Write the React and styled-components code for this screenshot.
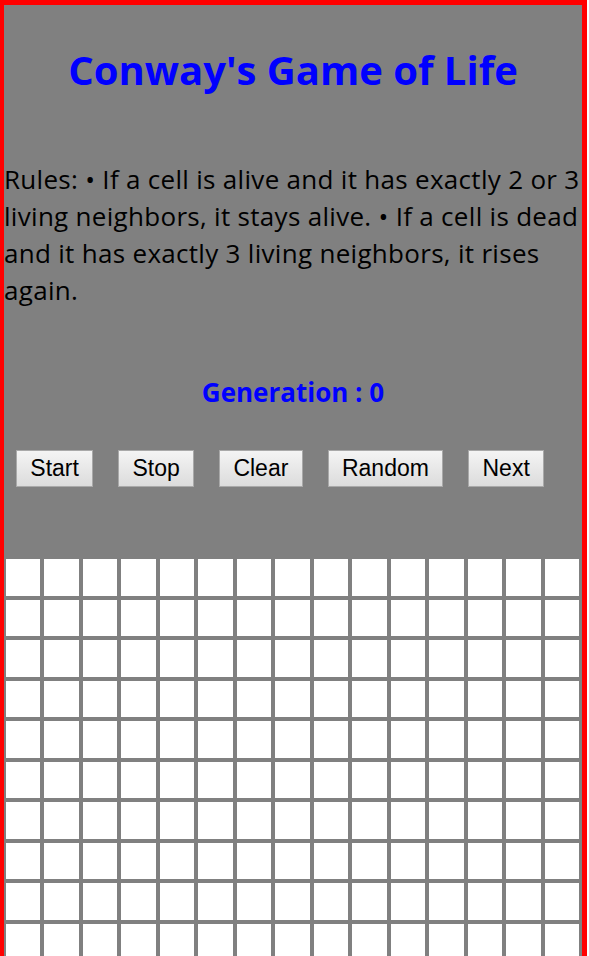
import React, { useState, useEffect, useRef, useCallback } from "react";
import styled, { createGlobalStyle } from "styled-components";

const ROWS = 15;
const COLS = 15;

const GlobalStyle = createGlobalStyle`
  html, body {
    margin: 0;
    padding: 0;
    background: #ffffff;
  }
`;

const Frame = styled.div`
  box-sizing: border-box;
  width: 587px;
  background: #808080;
  border-style: solid;
  border-color: #ff0000;
  border-width: 5px 5px 0 4px;
  font-family: "Open Sans", "Noto Sans", sans-serif;
`;

const Title = styled.h1`
  margin: 41px 0 0;
  font-size: 40px;
  line-height: 48px;
  font-weight: 700;
  color: #0000ff;
  text-align: center;
`;

const Rules = styled.p`
  margin: 67px 0 0;
  font-size: 26px;
  line-height: 37px;
  letter-spacing: 0.3px;
  color: #000000;
`;

const Generation = styled.h3`
  margin: 66px 0 0;
  font-size: 26px;
  line-height: 34px;
  font-weight: 700;
  color: #0000ff;
  text-align: center;
`;

const Controls = styled.div`
  display: flex;
  gap: 25px;
  padding-left: 12px;
  margin-top: 41px;
`;

const Button = styled.button`
  box-sizing: border-box;
  height: 37px;
  padding: 0 13.3px;
  border: 1px solid #a9a9a9;
  border-radius: 0;
  background: linear-gradient(#f4f4f4, #dcdcdc);
  font-family: "Liberation Sans", Arial, sans-serif;
  font-size: 23px;
  color: #000000;
  cursor: pointer;
`;

const Board = styled.div`
  display: grid;
  grid-template-columns: repeat(${(p) => p.$cols}, 1fr);
  grid-auto-rows: 36.5px;
  gap: 4px;
  padding: 0 3px 0 2px;
  margin-top: 72px;
`;

const Cell = styled.div`
  background: ${(p) => (p.$alive ? "#000000" : "#ffffff")};
  cursor: pointer;
`;

const empty = () => Array.from({ length: ROWS }, () => Array(COLS).fill(false));

function step(grid) {
  return grid.map((row, r) =>
    row.map((alive, c) => {
      let n = 0;
      for (let dr = -1; dr <= 1; dr++) {
        for (let dc = -1; dc <= 1; dc++) {
          if (!dr && !dc) continue;
          const rr = r + dr;
          const cc = c + dc;
          if (rr >= 0 && rr < ROWS && cc >= 0 && cc < COLS && grid[rr][cc]) n++;
        }
      }
      return alive ? n === 2 || n === 3 : n === 3;
    })
  );
}

export default function App() {
  const [grid, setGrid] = useState(empty);
  const [generation, setGeneration] = useState(0);
  const [running, setRunning] = useState(false);
  const timer = useRef(null);

  const next = useCallback(() => {
    setGrid((g) => step(g));
    setGeneration((n) => n + 1);
  }, []);

  useEffect(() => {
    if (!running) return undefined;
    timer.current = setInterval(next, 300);
    return () => clearInterval(timer.current);
  }, [running, next]);

  const toggle = (r, c) =>
    setGrid((g) => g.map((row, ri) => row.map((v, ci) => (ri === r && ci === c ? !v : v))));

  return (
    <>
      <GlobalStyle />
      <Frame>
        <Title>Conway's Game of Life</Title>
        <Rules>
          Rules: • If a cell is alive and it has exactly 2 or 3 living neighbors, it stays alive. • If a
          cell is dead and it has exactly 3 living neighbors, it rises again.
        </Rules>
        <Generation>Generation : {generation}</Generation>
        <Controls>
          <Button onClick={() => setRunning(true)}>Start</Button>
          <Button onClick={() => setRunning(false)}>Stop</Button>
          <Button
            onClick={() => {
              setRunning(false);
              setGrid(empty());
              setGeneration(0);
            }}
          >
            Clear
          </Button>
          <Button
            onClick={() =>
              setGrid(Array.from({ length: ROWS }, () => Array.from({ length: COLS }, () => Math.random() < 0.3)))
            }
          >
            Random
          </Button>
          <Button onClick={next}>Next</Button>
        </Controls>
        <Board $cols={COLS}>
          {grid.map((row, r) =>
            row.map((alive, c) => <Cell key={`${r}-${c}`} $alive={alive} onClick={() => toggle(r, c)} />)
          )}
        </Board>
      </Frame>
    </>
  );
}
